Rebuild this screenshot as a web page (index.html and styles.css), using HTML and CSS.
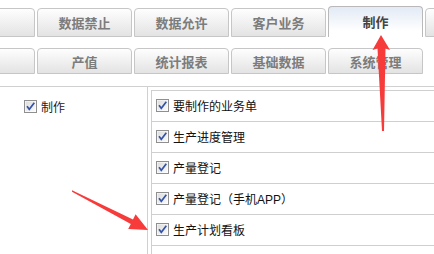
FILE: index.html
```html
<!DOCTYPE html>
<html lang="zh-CN">
<head>
    <meta charset="UTF-8">
    <title>权限设置 - 制作</title>
    <link rel="stylesheet" href="styles.css">
</head>
<body>
    <div class="page">
        <div class="tab-row top">
            <div class="tab"></div>
            <div class="tab">数据禁止</div>
            <div class="tab">数据允许</div>
            <div class="tab">客户业务</div>
            <div class="tab active">制作</div>
            <div class="tab"></div>
        </div>

        <div class="tab-row sub">
            <div class="tab"></div>
            <div class="tab">产值</div>
            <div class="tab">统计报表</div>
            <div class="tab">基础数据</div>
            <div class="tab">系统管理</div>
        </div>

        <div class="perm-table">
            <div class="perm-group">
                <label class="check-item"><span class="cb"><svg viewBox="0 0 13 13"><use href="#cb"/></svg></span>制作</label>
            </div>
            <div class="perm-items">
                <ul class="item-list">
                    <li><span class="cb"><svg viewBox="0 0 13 13"><use href="#cb"/></svg></span>要制作的业务单</li>
                    <li><span class="cb"><svg viewBox="0 0 13 13"><use href="#cb"/></svg></span>生产进度管理</li>
                    <li><span class="cb"><svg viewBox="0 0 13 13"><use href="#cb"/></svg></span>产量登记</li>
                    <li><span class="cb"><svg viewBox="0 0 13 13"><use href="#cb"/></svg></span>产量登记（手机APP）</li>
                    <li><span class="cb"><svg viewBox="0 0 13 13"><use href="#cb"/></svg></span>生产计划看板</li>
                    <li><span class="cb"><svg viewBox="0 0 13 13"><use href="#cb"/></svg></span></li>
                </ul>
            </div>
        </div>

        <!-- annotation arrows from the screenshot tool -->
        <svg class="arrows" width="434" height="254" viewBox="0 0 434 254">
            <polygon points="381,35 390,50 385.5,48.5 384,131 382,131 377.5,48.5 372.5,50" />
            <polygon points="72,190.3 133,219.5 135.6,214.3 148,230 128.2,229.1 130.8,224 72,191.7" />
        </svg>

        <svg width="0" height="0" class="defs">
            <defs>
                <linearGradient id="cbfill" x1="0" y1="0" x2="1" y2="1">
                    <stop offset="0" stop-color="#dcdcdc"/>
                    <stop offset="1" stop-color="#fbfbfb"/>
                </linearGradient>
                <g id="cb">
                    <rect x="0.5" y="0.5" width="12" height="12" fill="#fff" stroke="#8f8f8f"/>
                    <rect x="1.5" y="1.5" width="10" height="10" fill="url(#cbfill)"/>
                    <path d="M3 6.2 L5.3 9.3 L10.3 2.8" fill="none" stroke="#3553a6" stroke-width="1.7"/>
                </g>
            </defs>
        </svg>
    </div>
</body>
</html>
```

FILE: styles.css
```css
* {
    margin: 0;
    padding: 0;
    box-sizing: border-box;
}

body {
    background: #fff;
    font-family: "Liberation Sans", "Noto Sans CJK SC", sans-serif;
    font-size: 12px;
    color: #111;
}

.page {
    position: relative;
    width: 434px;
    height: 254px;
    overflow: hidden;
}

.tab-row {
    display: flex;
    align-items: flex-end;
    gap: 2px;
    margin-left: -60px;
}

.tab-row.top {
    height: 37px;
}

.tab-row.sub {
    height: 26px;
    margin-top: 11px;
}

.tab {
    flex: 0 0 95px;
    display: flex;
    align-items: center;
    justify-content: center;
    border: 1px solid #c6c6c6;
    border-radius: 4px 4px 0 0;
    background: linear-gradient(#fefefe, #e3e3e3);
    color: #7c7c7c;
    font-size: 13px;
    font-weight: bold;
}

.top .tab {
    height: 29px;
}

.sub .tab {
    height: 26px;
}

.top .tab.active {
    height: 31px;
    border-color: #b9b9b9;
    border-bottom: none;
    background: linear-gradient(#e2eaf5, #fff 80%);
    color: #444;
    padding-bottom: 1px;
}

.perm-table {
    display: flex;
    margin-top: 12px;
    border-top: 1px solid #d0d0d0;
    height: 200px;
}

.perm-group {
    width: 148px;
    border-right: 1px solid #d0d0d0;
    padding: 11px 0 0 24px;
}

.check-item {
    display: flex;
    align-items: center;
    gap: 4px;
    color: #222;
}

.cb {
    display: block;
    width: 13px;
    height: 13px;
    flex: 0 0 13px;
}

.cb svg {
    display: block;
    width: 13px;
    height: 13px;
}

.perm-items {
    flex: 1;
    padding: 3px 0 0 3px;
}

.item-list {
    list-style: none;
    border-top: 1px solid #cfcfcf;
    border-left: 1px solid #cfcfcf;
}

.item-list li {
    display: flex;
    align-items: center;
    gap: 4px;
    height: 31px;
    padding: 0 0 1px 4px;
    border-bottom: 1px solid #cfcfcf;
}

.arrows {
    position: absolute;
    left: 0;
    top: 0;
    fill: #f73b3b;
}

.defs {
    position: absolute;
}
```
